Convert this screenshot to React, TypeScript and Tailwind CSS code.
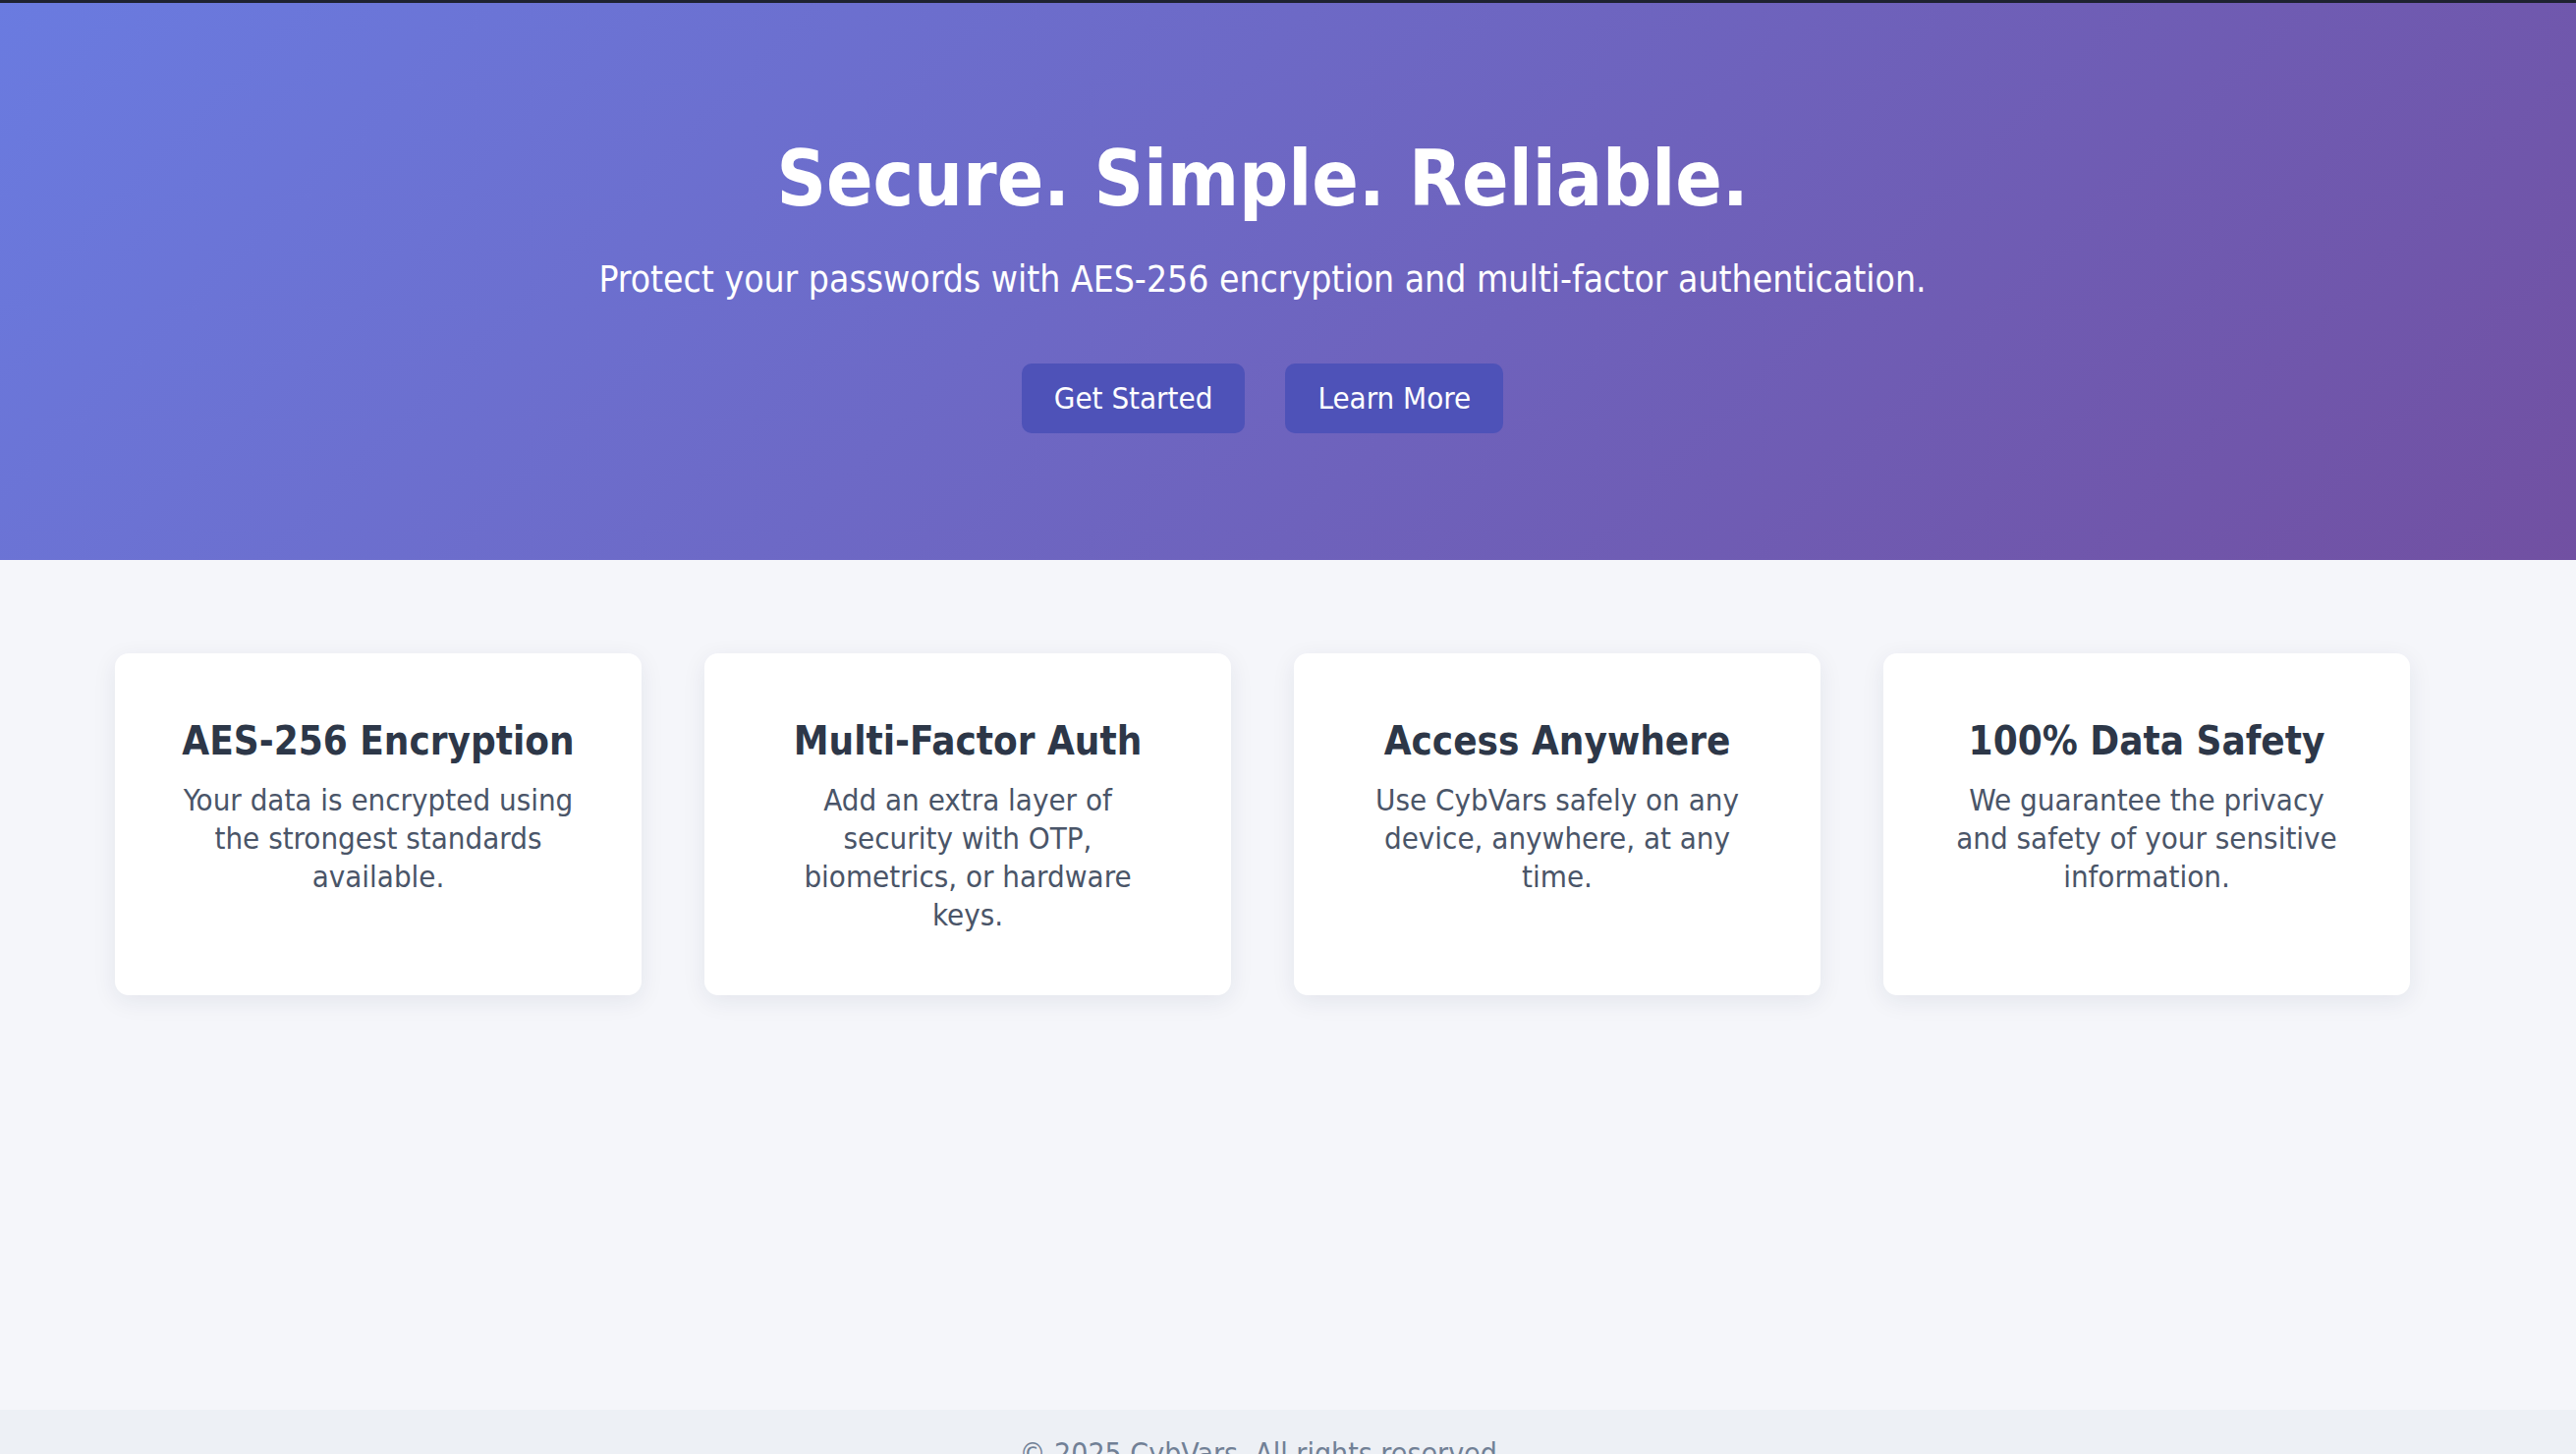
const features = [
  {
    title: "AES-256 Encryption",
    text: "Your data is encrypted using the strongest standards available.",
  },
  {
    title: "Multi-Factor Auth",
    text: "Add an extra layer of security with OTP, biometrics, or hardware keys.",
  },
  {
    title: "Access Anywhere",
    text: "Use CybVars safely on any device, anywhere, at any time.",
  },
  {
    title: "100% Data Safety",
    text: "We guarantee the privacy and safety of your sensitive information.",
  },
];

export default function App() {
  return (
    <div className="flex flex-col bg-[#f5f6fa] font-['DejaVu_Sans_Condensed','DejaVu_Sans',sans-serif] font-stretch-condensed">
      {/* hero */}
      <section className="border-t-[3px] border-[#1e2230] bg-[linear-gradient(135deg,#6a7be0_0%,#7150a2_100%)] text-white h-[570px]">
        <div className="pr-[52px] pt-[132px] flex flex-col items-center text-center">
          <h1 className="text-[78px] leading-[94px] font-bold">Secure. Simple. Reliable.</h1>
          <p className="mt-[33px] text-[37px] leading-[46px]">
            Protect your passwords with AES-256 encryption and multi-factor authentication.
          </p>
          <div className="mt-[62px] flex gap-[41px]">
            <button className="h-[71px] px-[33px] rounded-[10px] bg-[#4e52b8] text-[31px]">Get Started</button>
            <button className="h-[71px] px-[33px] rounded-[10px] bg-[#4e52b8] text-[31px]">Learn More</button>
          </div>
        </div>
      </section>

      {/* features */}
      <main className="h-[865px] pt-[95px] pr-[52px]">
        <div className="flex justify-center gap-[64px]">
          {features.map((f) => (
            <div
              key={f.title}
              className="w-[536px] h-[348px] bg-white rounded-[14px] shadow-[0_6px_24px_rgba(30,40,80,0.08)] px-[64px] pt-[64px] text-center"
            >
              <h3 className="text-[40px] leading-[50px] font-bold text-[#2d3748]">{f.title}</h3>
              <p className="mt-[16px] text-[31px] leading-[39px] text-[#4a5568]">{f.text}</p>
            </div>
          ))}
        </div>
      </main>

      <footer className="bg-[#edf0f5] pr-[52px] pt-[22px] pb-[32px] text-center text-[30px] leading-[45px] text-[#718096]">
        © 2025 CybVars. All rights reserved.
      </footer>
    </div>
  );
}
